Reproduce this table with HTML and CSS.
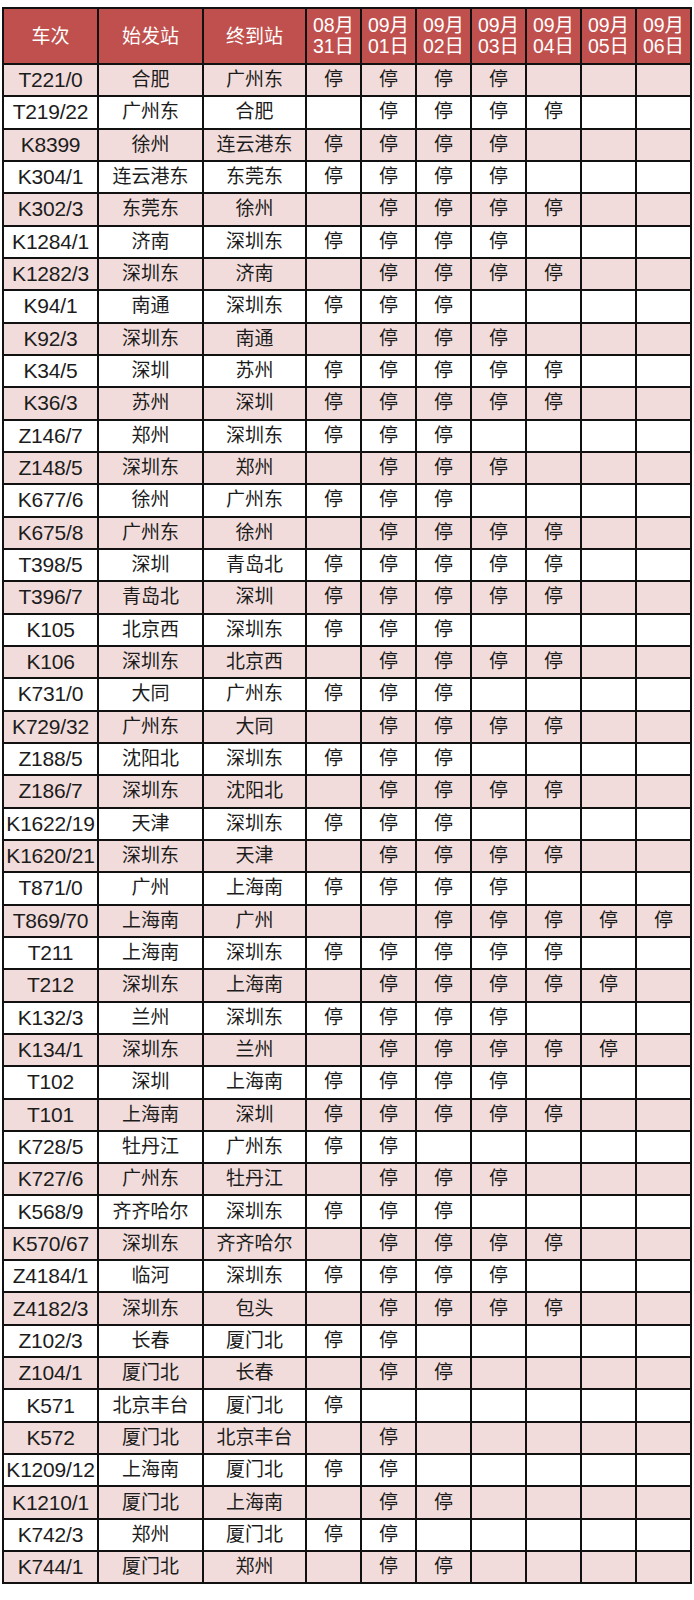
FILE: index.html
```html
<!DOCTYPE html>
<html lang="zh-CN">
<head>
<meta charset="utf-8">
<title>列车停运表</title>
<link rel="stylesheet" href="styles.css">
</head>
<body>
<table class="sched">
<colgroup>
<col class="c-no"><col class="c-from"><col class="c-to">
<col class="c-d"><col class="c-d"><col class="c-d"><col class="c-d"><col class="c-d"><col class="c-d"><col class="c-d">
</colgroup>
<thead>
<tr><th>车次</th><th>始发站</th><th>终到站</th><th class="d">08月<br>31日</th><th class="d">09月<br>01日</th><th class="d">09月<br>02日</th><th class="d">09月<br>03日</th><th class="d">09月<br>04日</th><th class="d">09月<br>05日</th><th class="d">09月<br>06日</th></tr>
</thead>
<tbody>
<tr class="p"><td>T221/0</td><td>合肥</td><td>广州东</td><td>停</td><td>停</td><td>停</td><td>停</td><td></td><td></td><td></td></tr>
<tr><td>T219/22</td><td>广州东</td><td>合肥</td><td></td><td>停</td><td>停</td><td>停</td><td>停</td><td></td><td></td></tr>
<tr class="p"><td>K8399</td><td>徐州</td><td>连云港东</td><td>停</td><td>停</td><td>停</td><td>停</td><td></td><td></td><td></td></tr>
<tr><td>K304/1</td><td>连云港东</td><td>东莞东</td><td>停</td><td>停</td><td>停</td><td>停</td><td></td><td></td><td></td></tr>
<tr class="p"><td>K302/3</td><td>东莞东</td><td>徐州</td><td></td><td>停</td><td>停</td><td>停</td><td>停</td><td></td><td></td></tr>
<tr><td>K1284/1</td><td>济南</td><td>深圳东</td><td>停</td><td>停</td><td>停</td><td>停</td><td></td><td></td><td></td></tr>
<tr class="p"><td>K1282/3</td><td>深圳东</td><td>济南</td><td></td><td>停</td><td>停</td><td>停</td><td>停</td><td></td><td></td></tr>
<tr><td>K94/1</td><td>南通</td><td>深圳东</td><td>停</td><td>停</td><td>停</td><td></td><td></td><td></td><td></td></tr>
<tr class="p"><td>K92/3</td><td>深圳东</td><td>南通</td><td></td><td>停</td><td>停</td><td>停</td><td></td><td></td><td></td></tr>
<tr><td>K34/5</td><td>深圳</td><td>苏州</td><td>停</td><td>停</td><td>停</td><td>停</td><td>停</td><td></td><td></td></tr>
<tr class="p"><td>K36/3</td><td>苏州</td><td>深圳</td><td>停</td><td>停</td><td>停</td><td>停</td><td>停</td><td></td><td></td></tr>
<tr><td>Z146/7</td><td>郑州</td><td>深圳东</td><td>停</td><td>停</td><td>停</td><td></td><td></td><td></td><td></td></tr>
<tr class="p"><td>Z148/5</td><td>深圳东</td><td>郑州</td><td></td><td>停</td><td>停</td><td>停</td><td></td><td></td><td></td></tr>
<tr><td>K677/6</td><td>徐州</td><td>广州东</td><td>停</td><td>停</td><td>停</td><td></td><td></td><td></td><td></td></tr>
<tr class="p"><td>K675/8</td><td>广州东</td><td>徐州</td><td></td><td>停</td><td>停</td><td>停</td><td>停</td><td></td><td></td></tr>
<tr><td>T398/5</td><td>深圳</td><td>青岛北</td><td>停</td><td>停</td><td>停</td><td>停</td><td>停</td><td></td><td></td></tr>
<tr class="p"><td>T396/7</td><td>青岛北</td><td>深圳</td><td>停</td><td>停</td><td>停</td><td>停</td><td>停</td><td></td><td></td></tr>
<tr><td>K105</td><td>北京西</td><td>深圳东</td><td>停</td><td>停</td><td>停</td><td></td><td></td><td></td><td></td></tr>
<tr class="p"><td>K106</td><td>深圳东</td><td>北京西</td><td></td><td>停</td><td>停</td><td>停</td><td>停</td><td></td><td></td></tr>
<tr><td>K731/0</td><td>大同</td><td>广州东</td><td>停</td><td>停</td><td>停</td><td></td><td></td><td></td><td></td></tr>
<tr class="p"><td>K729/32</td><td>广州东</td><td>大同</td><td></td><td>停</td><td>停</td><td>停</td><td>停</td><td></td><td></td></tr>
<tr><td>Z188/5</td><td>沈阳北</td><td>深圳东</td><td>停</td><td>停</td><td>停</td><td></td><td></td><td></td><td></td></tr>
<tr class="p"><td>Z186/7</td><td>深圳东</td><td>沈阳北</td><td></td><td>停</td><td>停</td><td>停</td><td>停</td><td></td><td></td></tr>
<tr><td>K1622/19</td><td>天津</td><td>深圳东</td><td>停</td><td>停</td><td>停</td><td></td><td></td><td></td><td></td></tr>
<tr class="p"><td>K1620/21</td><td>深圳东</td><td>天津</td><td></td><td>停</td><td>停</td><td>停</td><td>停</td><td></td><td></td></tr>
<tr><td>T871/0</td><td>广州</td><td>上海南</td><td>停</td><td>停</td><td>停</td><td>停</td><td></td><td></td><td></td></tr>
<tr class="p"><td>T869/70</td><td>上海南</td><td>广州</td><td></td><td></td><td>停</td><td>停</td><td>停</td><td>停</td><td>停</td></tr>
<tr><td>T211</td><td>上海南</td><td>深圳东</td><td>停</td><td>停</td><td>停</td><td>停</td><td>停</td><td></td><td></td></tr>
<tr class="p"><td>T212</td><td>深圳东</td><td>上海南</td><td></td><td>停</td><td>停</td><td>停</td><td>停</td><td>停</td><td></td></tr>
<tr><td>K132/3</td><td>兰州</td><td>深圳东</td><td>停</td><td>停</td><td>停</td><td>停</td><td></td><td></td><td></td></tr>
<tr class="p"><td>K134/1</td><td>深圳东</td><td>兰州</td><td></td><td>停</td><td>停</td><td>停</td><td>停</td><td>停</td><td></td></tr>
<tr><td>T102</td><td>深圳</td><td>上海南</td><td>停</td><td>停</td><td>停</td><td>停</td><td></td><td></td><td></td></tr>
<tr class="p"><td>T101</td><td>上海南</td><td>深圳</td><td>停</td><td>停</td><td>停</td><td>停</td><td>停</td><td></td><td></td></tr>
<tr><td>K728/5</td><td>牡丹江</td><td>广州东</td><td>停</td><td>停</td><td></td><td></td><td></td><td></td><td></td></tr>
<tr class="p"><td>K727/6</td><td>广州东</td><td>牡丹江</td><td></td><td>停</td><td>停</td><td>停</td><td></td><td></td><td></td></tr>
<tr><td>K568/9</td><td>齐齐哈尔</td><td>深圳东</td><td>停</td><td>停</td><td>停</td><td></td><td></td><td></td><td></td></tr>
<tr class="p"><td>K570/67</td><td>深圳东</td><td>齐齐哈尔</td><td></td><td>停</td><td>停</td><td>停</td><td>停</td><td></td><td></td></tr>
<tr><td>Z4184/1</td><td>临河</td><td>深圳东</td><td>停</td><td>停</td><td>停</td><td>停</td><td></td><td></td><td></td></tr>
<tr class="p"><td>Z4182/3</td><td>深圳东</td><td>包头</td><td></td><td>停</td><td>停</td><td>停</td><td>停</td><td></td><td></td></tr>
<tr><td>Z102/3</td><td>长春</td><td>厦门北</td><td>停</td><td>停</td><td></td><td></td><td></td><td></td><td></td></tr>
<tr class="p"><td>Z104/1</td><td>厦门北</td><td>长春</td><td></td><td>停</td><td>停</td><td></td><td></td><td></td><td></td></tr>
<tr><td>K571</td><td>北京丰台</td><td>厦门北</td><td>停</td><td></td><td></td><td></td><td></td><td></td><td></td></tr>
<tr class="p"><td>K572</td><td>厦门北</td><td>北京丰台</td><td></td><td>停</td><td></td><td></td><td></td><td></td><td></td></tr>
<tr><td>K1209/12</td><td>上海南</td><td>厦门北</td><td>停</td><td>停</td><td></td><td></td><td></td><td></td><td></td></tr>
<tr class="p"><td>K1210/1</td><td>厦门北</td><td>上海南</td><td></td><td>停</td><td>停</td><td></td><td></td><td></td><td></td></tr>
<tr><td>K742/3</td><td>郑州</td><td>厦门北</td><td>停</td><td>停</td><td></td><td></td><td></td><td></td><td></td></tr>
<tr class="p"><td>K744/1</td><td>厦门北</td><td>郑州</td><td></td><td>停</td><td>停</td><td></td><td></td><td></td><td></td></tr>
</tbody>
</table>
</body>
</html>
```
FILE: styles.css
```css
html, body {
  margin: 0;
  padding: 0;
  background: #ffffff;
}
body {
  padding: 7px 0 0 2px;
  font-family: "Liberation Sans", "Noto Sans CJK SC", Arial, sans-serif;
  color: #1c1c1c;
}
.sched {
  border-collapse: collapse;
  table-layout: fixed;
  width: 689px;
  border: 2px solid #111111;
}
.c-no { width: 95px; }
.c-from { width: 105px; }
.c-to { width: 103px; }
.c-d { width: 55px; }
.sched th,
.sched td {
  border: 2px solid #111111;
  text-align: center;
  vertical-align: middle;
  padding: 0;
  font-size: 19px;
  font-weight: normal;
  white-space: nowrap;
  overflow: hidden;
}
.sched thead th {
  background: #c0504d;
  color: #ffffff;
  height: 54px;
  line-height: 21px;
}
.sched thead th.d {
  font-size: 19.5px;
}
.sched tbody tr {
  height: 32.34px;
}
.sched tbody td {
  line-height: 22px;
}
.sched tbody td:first-child {
  font-size: 21px;
  letter-spacing: -0.2px;
}
.sched tbody tr.p td {
  background: #f2dcdb;
}
```
